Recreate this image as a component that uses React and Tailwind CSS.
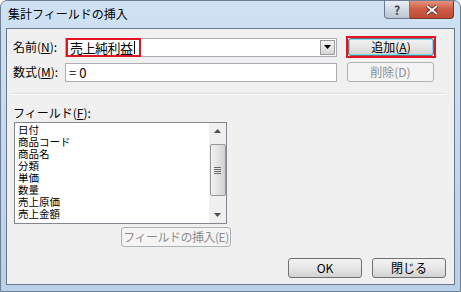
import React from "react";

const font = { fontFamily: '"Noto Sans CJK JP", "Noto Sans", sans-serif' };
const listFont = { fontFamily: '"Liberation Sans", "Noto Sans CJK JP", sans-serif' };

function Btn({ children, disabled, className = "" }) {
  return (
    <div
      className={
        "flex items-center justify-center whitespace-nowrap rounded-[3px] border text-[12px] leading-none " +
        (disabled
          ? "border-[#adb2b5] bg-[#f4f4f4] text-[#8d8d8d] "
          : "border-[#707070] bg-gradient-to-b from-[#f3f3f3] via-[#e6e6e6] to-[#d2d2d2] text-black ") +
        className
      }
    >
      {children}
    </div>
  );
}

function ScrollArrow({ up }) {
  return (
    <div className="flex h-[16px] items-center justify-center">
      <svg width="7" height="4" viewBox="0 0 7 4">
        {up ? (
          <path d="M0 4 L3.5 0 L7 4 Z" fill="#4d4d4d" />
        ) : (
          <path d="M0 0 L3.5 4 L7 0 Z" fill="#4d4d4d" />
        )}
      </svg>
    </div>
  );
}

export default function App() {
  const fields = ["日付", "商品コード", "商品名", "分類", "単価", "数量", "売上原価", "売上金額"];

  return (
    <div
      className="flex h-[292px] w-[461px] flex-col overflow-hidden rounded-t-[7px] border border-[#6d7f95] bg-gradient-to-b from-[#cfe2f4] via-[#c3d9ee] to-[#b8d0e8]"
      style={font}
    >
      {/* title bar */}
      <div className="flex h-[27px] shrink-0 items-start justify-between">
        <div className="pl-[7px] pt-[5px] text-[12px] leading-[16px] text-black">集計フィールドの挿入</div>
        <div className="mr-[6px] flex">
          <div className="flex h-[18px] w-[26px] items-center justify-center rounded-bl-[4px] border border-t-0 border-[#6b7a8c] bg-gradient-to-b from-[#e9eef4] to-[#b9c6d4] text-[12px] font-bold leading-none text-[#3c4450]">
            ?
          </div>
          <div className="flex h-[18px] w-[44px] items-center justify-center rounded-br-[4px] border border-l-0 border-t-0 border-[#6b3a30] bg-gradient-to-b from-[#e2917f] via-[#cd5a44] to-[#c04a32]">
            <svg width="12" height="10" viewBox="0 0 12 10">
              <path d="M1 1 L11 9 M11 1 L1 9" stroke="#4a1e18" strokeWidth="3.4" />
              <path d="M1 1 L11 9 M11 1 L1 9" stroke="#ffffff" strokeWidth="2" />
            </svg>
          </div>
        </div>
      </div>

      {/* client area */}
      <div className="mx-[5px] mb-[6px] flex flex-1 flex-col border border-[#6b7686] bg-[#f0f0f0] px-[6px] pt-[7px]">
        {/* name row */}
        <div className="flex items-center">
          <div className="w-[52px] text-[12px] leading-none">
            名前(<span className="underline">N</span>):
          </div>
          <div className="flex h-[19px] w-[272px] items-center border border-[#abadb3] bg-white">
            <div className="flex h-[19px] w-[75px] items-center border-2 border-[#e0151f] pl-[2px] text-[13px] leading-none tracking-[-0.5px]">
              売上純利益<span className="ml-[1px] inline-block h-[13px] w-[1px] bg-black" />
            </div>
            <div className="flex-1" />
            <div className="mr-[1px] flex h-[15px] w-[15px] items-center justify-center border border-[#9a9a9a] bg-gradient-to-b from-[#f4f4f4] to-[#d6d6d6]">
              <svg width="7" height="4" viewBox="0 0 7 4">
                <path d="M0 0 L3.5 4 L7 0 Z" fill="#000" />
              </svg>
            </div>
          </div>
          <div className="ml-[9px] h-[22px] w-[90px] border-2 border-[#e0151f]">
            <Btn className="h-full w-full border-[#3c7fb1] shadow-[inset_0_0_0_1px_#7fdcf7]">
              追加(<span className="underline">A</span>)
            </Btn>
          </div>
        </div>

        {/* formula row */}
        <div className="mt-[4px] flex items-center">
          <div className="w-[52px] text-[12px] leading-none">
            数式(<span className="underline">M</span>):
          </div>
          <div className="flex h-[19px] w-[272px] items-center border border-[#abadb3] bg-white pl-[3px] text-[13px] leading-none">
            = 0
          </div>
          <Btn disabled className="ml-[10px] h-[20px] w-[87px]">
            削除(D)
          </Btn>
        </div>

        {/* separator */}
        <div className="mt-[11px] h-[2px] w-[432px] border-t border-b border-t-[#d5dfe5] border-b-[#ffffff]" />

        <div className="mt-[12px] text-[12px] leading-none">
          フィールド(<span className="underline">F</span>):
        </div>

        {/* list */}
        <div className="ml-[1px] mt-[3px] flex h-[102px] w-[213px] border border-[#828790] bg-white">
          <div className="flex-1 pl-[3px] pt-[1px]" style={listFont}>
            {fields.map((f) => (
              <div key={f} className="h-[12px] text-[10.5px] leading-[12px]">
                {f}
              </div>
            ))}
          </div>
          <div className="flex w-[17px] flex-col bg-[#f0f0f0]">
            <ScrollArrow up />
            <div className="mt-[5px] flex h-[52px] w-[16px] items-center justify-center self-center rounded-[2px] border border-[#979797] bg-gradient-to-r from-[#f3f3f3] to-[#d2d2d2]">
              <div className="flex flex-col gap-[1px]">
                <div className="h-[1px] w-[7px] bg-[#6a6a6a]" />
                <div className="h-[1px] w-[7px] bg-[#6a6a6a]" />
                <div className="h-[1px] w-[7px] bg-[#6a6a6a]" />
                <div className="h-[1px] w-[7px] bg-[#6a6a6a]" />
              </div>
            </div>
            <div className="flex-1" />
            <ScrollArrow />
          </div>
        </div>

        <div className="mt-[3px] flex w-[218px] justify-end">
          <Btn disabled className="h-[20px] w-[110px] text-[11px] tracking-[-0.5px]">
            フィールドの挿入(E)
          </Btn>
        </div>

        {/* bottom buttons */}
        <div className="mt-[11px] flex w-[433px] justify-end gap-[10px]">
          <Btn className="h-[20px] w-[74px]">OK</Btn>
          <Btn className="h-[20px] w-[74px]">閉じる</Btn>
        </div>
      </div>
    </div>
  );
}
